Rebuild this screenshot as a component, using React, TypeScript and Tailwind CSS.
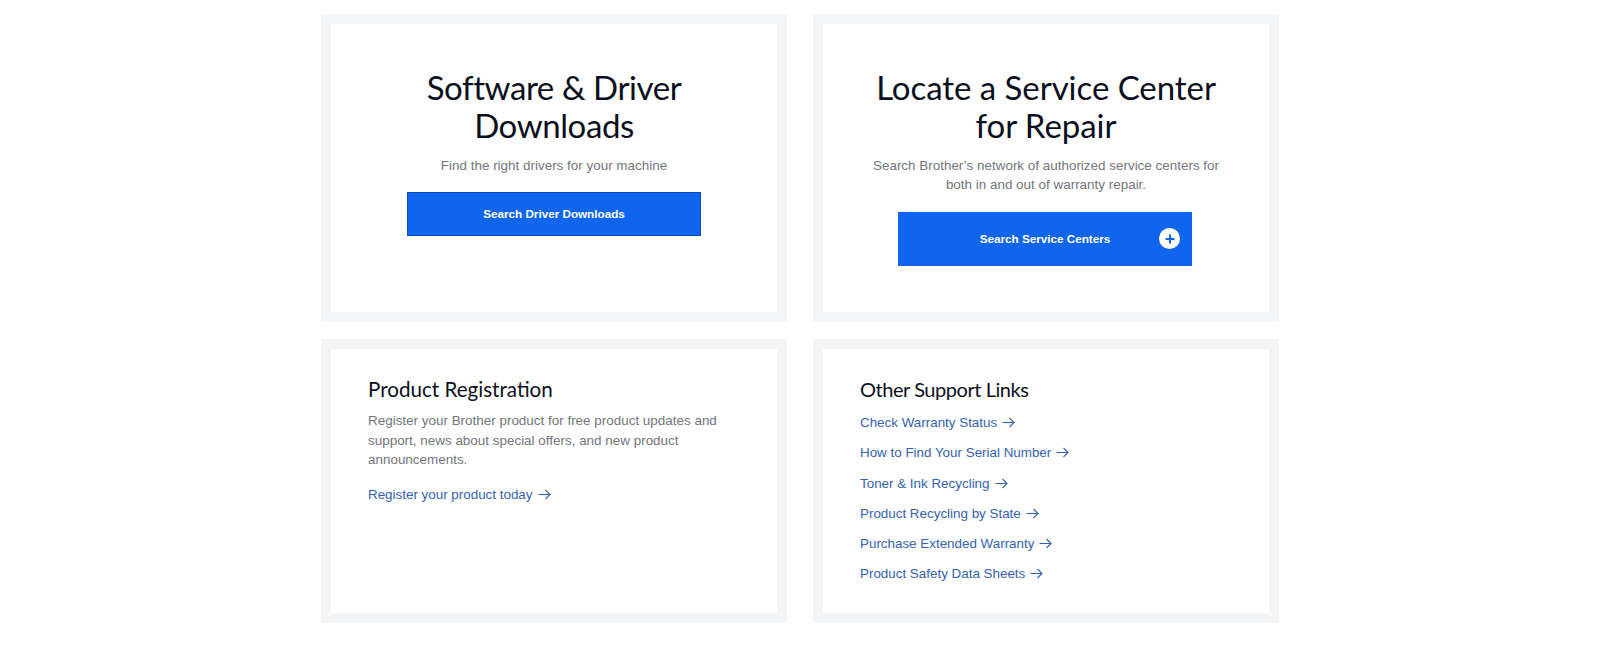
const arial = "font-['Liberation_Sans',Arial,sans-serif]";
const display = "font-['Lato',sans-serif]";

function Arrow() {
  return (
    <svg width="13" height="11" viewBox="0 0 13 11" fill="none" stroke="currentColor" strokeWidth="1.1" className="inline-block ml-[5px] align-[-1px]">
      <path d="M0.5 5.5H12M7.5 1L12 5.5L7.5 10" />
    </svg>
  );
}

function SupportLink({ children }: { children: string }) {
  return (
    <a href="#" className="text-[13.4px] leading-[19px] text-[#3563b0] block">
      {children}
      <Arrow />
    </a>
  );
}

function Card({ className, children }: { className: string; children: React.ReactNode }) {
  return <section className={`border-[10px] border-[#f4f5f6] bg-white ${className}`}>{children}</section>;
}

const links = [
  "Check Warranty Status",
  "How to Find Your Serial Number",
  "Toner & Ink Recycling",
  "Product Recycling by State",
  "Purchase Extended Warranty",
  "Product Safety Data Sheets",
];

export default function App() {
  return (
    <main className={`bg-white min-h-[664px] pt-[14px] ${arial}`}>
      <div className="w-[958px] ml-[321px] grid grid-cols-[466px_466px] gap-x-[26px] gap-y-[17px] grid-rows-[308px_284px]">
        <Card className="flex flex-col items-center pt-[44px] text-center">
          <h2 className={`${display} font-normal text-[33px] tracking-[-0.4px] leading-[38px] text-[#0b1021] w-[300px]`}>
            Software &amp; Driver Downloads
          </h2>
          <p className="mt-[12px] text-[13.45px] leading-[19px] text-[#73767c]">Find the right drivers for your machine</p>
          <a href="#" className="mt-[17px] w-[294px] h-[44px] flex items-center justify-center bg-[#1065ee] border border-[#0a4cb8] text-white text-[11.7px] font-bold">
            Search Driver Downloads
          </a>
        </Card>
        <Card className="flex flex-col items-center pt-[44px] text-center">
          <h2 className={`${display} font-normal text-[33px] tracking-[-0.05px] leading-[38px] text-[#0b1021] w-[350px]`}>
            Locate a Service Center for Repair
          </h2>
          <p className="mt-[12px] text-[13.45px] leading-[19px] text-[#73767c] w-[360px]">
            Search Brother’s network of authorized service centers for both in and out of warranty repair.
          </p>
          <a href="#" className="relative mt-[18px] -ml-[2px] w-[294px] h-[54px] flex items-center justify-center bg-[#1065ee] text-white text-[11.7px] font-bold">
            Search Service Centers
            <span className="absolute right-[12px] top-[16px] w-[21px] h-[21px] rounded-full bg-white flex items-center justify-center">
              <svg width="10" height="10" viewBox="0 0 10 10" stroke="#1065ee" strokeWidth="2">
                <path d="M5 0.5V9.5M0.5 5H9.5" />
              </svg>
            </span>
          </a>
        </Card>
        <Card className="pt-[26px] px-[37px]">
          <h3 className={`${display} font-normal text-[20.6px] leading-[28px] text-[#0b1021]`}>Product Registration</h3>
          <p className="mt-[8px] text-[13.45px] leading-[19.5px] text-[#73767c]">
            Register your Brother product for free product updates and support, news about special offers, and new product announcements.
          </p>
          <div className="mt-[15px]">
            <SupportLink>Register your product today</SupportLink>
          </div>
        </Card>
        <Card className="pt-[26px] px-[37px]">
          <h3 className={`${display} font-normal text-[20px] tracking-[-0.45px] leading-[28px] text-[#0b1021]`}>Other Support Links</h3>
          <div className="mt-[10px] flex flex-col gap-[11.3px]">
            {links.map((l) => (
              <SupportLink key={l}>{l}</SupportLink>
            ))}
          </div>
        </Card>
      </div>
    </main>
  );
}
